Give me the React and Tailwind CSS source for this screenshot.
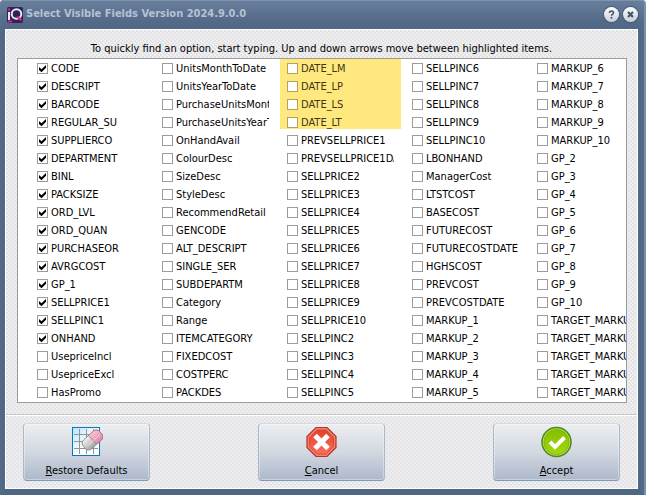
import React, { useState } from "react";

const COLUMNS = [
  ["CODE", "DESCRIPT", "BARCODE", "REGULAR_SU", "SUPPLIERCO", "DEPARTMENT", "BINL", "PACKSIZE", "ORD_LVL", "ORD_QUAN", "PURCHASEOR", "AVRGCOST", "GP_1", "SELLPRICE1", "SELLPINC1", "ONHAND", "UsepriceIncl", "UsepriceExcl", "HasPromo"],
  ["UnitsMonthToDate", "UnitsYearToDate", "PurchaseUnitsMonthToDate", "PurchaseUnitsYearToDate", "OnHandAvail", "ColourDesc", "SizeDesc", "StyleDesc", "RecommendRetail", "GENCODE", "ALT_DESCRIPT", "SINGLE_SER", "SUBDEPARTM", "Category", "Range", "ITEMCATEGORY", "FIXEDCOST", "COSTPERC", "PACKDES"],
  ["DATE_LM", "DATE_LP", "DATE_LS", "DATE_LT", "PREVSELLPRICE1", "PREVSELLPRICE1DATE", "SELLPRICE2", "SELLPRICE3", "SELLPRICE4", "SELLPRICE5", "SELLPRICE6", "SELLPRICE7", "SELLPRICE8", "SELLPRICE9", "SELLPRICE10", "SELLPINC2", "SELLPINC3", "SELLPINC4", "SELLPINC5"],
  ["SELLPINC6", "SELLPINC7", "SELLPINC8", "SELLPINC9", "SELLPINC10", "LBONHAND", "ManagerCost", "LTSTCOST", "BASECOST", "FUTURECOST", "FUTURECOSTDATE", "HGHSCOST", "PREVCOST", "PREVCOSTDATE", "MARKUP_1", "MARKUP_2", "MARKUP_3", "MARKUP_4", "MARKUP_5"],
  ["MARKUP_6", "MARKUP_7", "MARKUP_8", "MARKUP_9", "MARKUP_10", "GP_2", "GP_3", "GP_4", "GP_5", "GP_6", "GP_7", "GP_8", "GP_9", "GP_10", "TARGET_MARKUP_1", "TARGET_MARKUP_2", "TARGET_MARKUP_3", "TARGET_MARKUP_4", "TARGET_MARKUP_5"],
];

const HATCH =
  "bg-[repeating-conic-gradient(#e3e3e5_0_25%,#efeff1_0_50%)] bg-[length:4px_4px]";

function Field({ name, initial, marked }) {
  const [on, setOn] = useState(initial);
  return (
    <label className={`flex h-[18px] w-[107px] gap-[3px] overflow-hidden whitespace-nowrap ${marked ? "text-[#3d3413]" : ""}`}>
      <span className="grid h-[17px] w-[11px] shrink-0 items-center">
        <input
          type="checkbox"
          checked={on}
          onChange={() => setOn(!on)}
          className={`peer col-start-1 row-start-1 size-[11px] appearance-none border bg-white ${marked ? "border-[#b3a35a]" : "border-[#9c9c9c]"}`}
        />
        <svg viewBox="0 0 11 11" className="pointer-events-none invisible col-start-1 row-start-1 size-[11px] peer-checked:visible" aria-hidden="true">
          <path d="M2 4v3l2.5 2.2L9 4.8V2L4.5 6.2z" fill="#000" />
        </svg>
      </span>
      <span className="leading-[18px]">{name}</span>
    </label>
  );
}

function ActionButton({ hotkey, rest, children }) {
  return (
    <button
      type="button"
      className="flex h-[58px] w-[127px] flex-col items-center justify-between rounded-[4px] border border-[#a9b7ca] border-t-[#d3d9e0] border-b-[#7f98b8] bg-linear-to-b from-[#eceef1] via-[#d3d8e1] to-[#acb8ca] pt-[2px] pb-px shadow-[inset_0_0_0_1px_rgba(255,255,255,0.35)]"
    >
      {children}
      <span className="leading-4">
        <span className="underline">{hotkey}</span>
        {rest}
      </span>
    </button>
  );
}

function GridEraserIcon() {
  return (
    <svg viewBox="0 0 32 32" className="size-8" aria-hidden="true">
      <defs>
        <linearGradient id="sheet" x1="0" y1="0" x2="1" y2="1">
          <stop offset="0" stopColor="#b9e4fb" />
          <stop offset="0.6" stopColor="#fff" />
        </linearGradient>
        <linearGradient id="rubber" x1="0" y1="0" x2="0" y2="1">
          <stop offset="0" stopColor="#f4f4f4" />
          <stop offset="1" stopColor="#a4a4a4" />
        </linearGradient>
        <linearGradient id="pink" x1="0" y1="0" x2="0" y2="1">
          <stop offset="0" stopColor="#f7c3d3" />
          <stop offset="1" stopColor="#dd8aa9" />
        </linearGradient>
      </defs>
      <rect x="1.5" y="1.500" width="27" height="28" fill="url(#sheet)" stroke="#0e76b3" />
      <path d="M8.500 3v25M15.500 3v25M22.500 3v25M3 8.500h24M3 15.500h24M3 22.500h24" stroke="#8d9499" fill="none" />
      <g transform="rotate(-42 21.500 14)">
        <rect x="10.500" y="8" width="22" height="12" rx="4.500" fill="url(#rubber)" stroke="#858080" strokeWidth="0.8" />
        <path d="M21.500 8h6.500a4.500 4.500 0 0 1 4.500 4.500v3a4.500 4.500 0 0 1-4.500 4.500h-6.500z" fill="url(#pink)" stroke="#b5708b" strokeWidth="0.8" />
        <path d="M14 15h16" stroke="#fff" strokeWidth="0.8" opacity="0.6" />
      </g>
    </svg>
  );
}

function CancelIcon() {
  return (
    <svg viewBox="0 0 32 32" className="size-8" aria-hidden="true">
      <defs>
        <linearGradient id="red" x1="0" y1="0" x2="0" y2="1">
          <stop offset="0" stopColor="#e0432c" />
          <stop offset="1" stopColor="#ff6d5c" />
        </linearGradient>
      </defs>
      <path d="M10 1.500h11l9 9v11l-9 9H10l-9-9v-11z" fill="#e98471" stroke="#b93222" strokeWidth="1.2" />
      <path d="M11 4h9l7.500 7.500v9L20 28h-9l-7.500-7.500v-9z" fill="url(#red)" stroke="#d8402e" strokeWidth="0.8" />
      <path d="M9 9.500l13 13M22 9.500l-13 13" stroke="#fff" strokeWidth="5" />
    </svg>
  );
}

function AcceptIcon() {
  return (
    <svg viewBox="0 0 32 32" className="size-8" aria-hidden="true">
      <defs>
        <linearGradient id="green" x1="0" y1="0" x2="0" y2="1">
          <stop offset="0" stopColor="#86bd00" />
          <stop offset="1" stopColor="#a0dc08" />
        </linearGradient>
      </defs>
      <circle cx="15.500" cy="16" r="14.500" fill="#b4dc62" stroke="#4f8a10" strokeWidth="1.500" />
      <circle cx="15.500" cy="16" r="12.500" fill="url(#green)" stroke="#79b00a" strokeWidth="0.8" />
      <path d="M9 16l5 5 9.500-9.500" stroke="#fff" strokeWidth="4" fill="none" />
    </svg>
  );
}

function Logo() {
  return (
    <svg viewBox="0 0 16 16" className="size-4" aria-hidden="true">
      <rect width="16" height="16" rx="2" fill="#2f2354" />
      <path d="M2 5v8" stroke="#e8e6f0" strokeWidth="2" />
      <circle cx="2" cy="2.500" r="1.300" fill="#e0218a" />
      <circle cx="9.500" cy="7" r="4.800" stroke="#e8e6f0" strokeWidth="2" fill="none" />
      <path d="M10 9.500l4.500 4M1 14.500h4" stroke="#e0218a" strokeWidth="2" />
    </svg>
  );
}

function RoundButton({ label, children }) {
  return (
    <button type="button" aria-label={label} className="grid size-[15px] place-items-center rounded-full bg-linear-to-b from-white to-[#c9ced6] shadow-[0_0_1px_1px_#465a76]">
      {children}
    </button>
  );
}

export default function App() {
  return (
    <div className="flex min-h-screen flex-col rounded-t-[4px] border-r-2 border-[#7a8fac] bg-[#506784] pr-[6px] pb-[6px] pl-[5px] font-['DejaVu_Sans_Condensed','DejaVu_Sans',sans-serif] text-[11px] text-black shadow-[inset_0_1px_0_#7f93ad,inset_0_24px_20px_-12px_#6b819f]">
      <header className="flex h-[29px] items-center gap-[3px] pl-[2px] text-[#b4c2d3]">
        <Logo />
        <h1 className="grow font-bold">Select Visible Fields Version 2024.9.0.0</h1>
        <div className="flex gap-[4px]">
          <RoundButton label="Help">
            <svg viewBox="0 0 9 9" className="size-[9px]" aria-hidden="true">
              <path d="M2.500 3q0-2 2-2t2 1.700q0 1-1 1.500t-1 1.500" stroke="#44566e" strokeWidth="1.600" fill="none" />
              <circle cx="4.500" cy="7.800" r="1" fill="#44566e" />
            </svg>
          </RoundButton>
          <RoundButton label="Close">
            <svg viewBox="0 0 9 9" className="size-[9px]" aria-hidden="true">
              <path d="M2 2l5 5M7 2l-5 5" stroke="#44566e" strokeWidth="2.200" />
            </svg>
          </RoundButton>
        </div>
      </header>
      <main className={`flex grow flex-col border border-white ${HATCH}`}>
        <p className="pt-[11px] text-center leading-4">To quickly find an option, start typing. Up and down arrows move between highlighted items.</p>
        <div className="relative mr-[10px] ml-[11px] mt-px flex gap-[18px] overflow-hidden border border-[#9c9c9c] bg-white pt-px pl-[19px]">
          <div className="absolute top-0 left-[262px] h-[70px] w-[121px] bg-[#ffe97f]" />
          {COLUMNS.map((names, c) => (
            <div key={c} className="relative shrink-0">
              {names.map((n, r) => (
                <Field key={n} name={n} initial={c === 0 && r < 16} marked={c === 2 && r < 4} />
              ))}
            </div>
          ))}
        </div>
        <footer className="mt-[11px] flex justify-between border-t border-[#c6c6c0] px-[17px] pt-[8px] pb-[7px] shadow-[inset_0_1px_0_#fff]">
          <ActionButton hotkey="R" rest="estore Defaults"><GridEraserIcon /></ActionButton>
          <ActionButton hotkey="C" rest="ancel"><CancelIcon /></ActionButton>
          <ActionButton hotkey="A" rest="ccept"><AcceptIcon /></ActionButton>
        </footer>
      </main>
    </div>
  );
}
